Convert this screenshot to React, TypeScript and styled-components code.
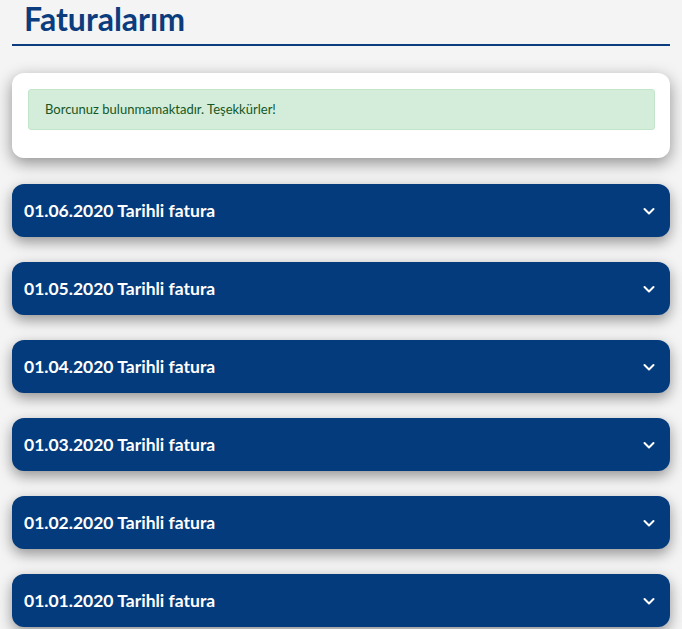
import styled, { createGlobalStyle } from 'styled-components';

const GlobalStyle = createGlobalStyle`
  body {
    margin: 0;
    background: #f4f4f4;
    font-family: Lato, "Open Sans", sans-serif;
  }
`;

const Page = styled.div`
  padding: 0 12px 20px;
`;

const Title = styled.h1`
  margin: 0;
  padding: 0 12px 6px;

  font-size: 32px;
  font-weight: 700;
  line-height: 38px;
  color: #0b3c7d;

  border-bottom: 2px solid #0b3c7d;
`;

const Card = styled.div`
  margin-top: 27px;
  padding: 16px 15px 28px 16px;

  background: #fff;
  border-radius: 12px;
  box-shadow: 0 5px 16px rgba(0, 0, 0, 0.42);
`;

const Alert = styled.div`
  padding: 11px 16px;

  font-size: 13px;
  line-height: 17px;
  color: #155724;

  background: #d4edda;
  border: 1px solid #c3e6cb;
  border-radius: 3px;
`;

const List = styled.div`
  margin-top: 26px;

  display: flex;
  flex-direction: column;
  gap: 25px;
`;

const Item = styled.div`
  height: 53px;
  padding: 0 14px 0 12px;

  display: flex;
  align-items: center;
  justify-content: space-between;

  background: #043b7c;
  border-radius: 12px;
  box-shadow: 0 5px 14px rgba(0, 0, 0, 0.4);

  color: #fff;
  font-size: 17.5px;
  font-weight: 700;
`;

const Chevron = () => (
  <svg width="14" height="14" viewBox="0 0 14 14" fill="none">
    <path d="M2.5 5l4.5 4.5 4.5-4.5" stroke="#fff" strokeWidth="2" strokeLinecap="round" strokeLinejoin="round" />
  </svg>
);

const dates = ['01.06.2020', '01.05.2020', '01.04.2020', '01.03.2020', '01.02.2020', '01.01.2020'];

export default function App() {
  return (
    <>
      <GlobalStyle />
      <Page>
        <Title>Faturalarım</Title>
        <Card>
          <Alert>Borcunuz bulunmamaktadır. Teşekkürler!</Alert>
        </Card>
        <List>
          {dates.map((d) => (
            <Item key={d}>
              <span>{d} Tarihli fatura</span>
              <Chevron />
            </Item>
          ))}
        </List>
      </Page>
    </>
  );
}
